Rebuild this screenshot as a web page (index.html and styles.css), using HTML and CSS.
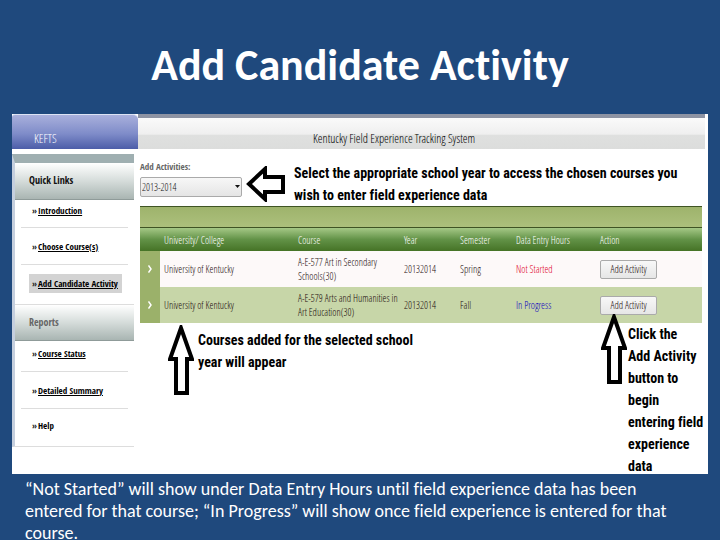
FILE: index.html
```
<!DOCTYPE html>
<html lang="en">
<head>
<meta charset="utf-8">
<title>Add Candidate Activity</title>
<link rel="stylesheet" href="styles.css">
</head>
<body>
<main class="slide">
  <h1 class="title">Add Candidate Activity</h1>
  <section class="screen">
    <header class="topbar">
      <div class="tab">KEFTS</div>
      <div class="banner">Kentucky Field Experience Tracking System</div>
    </header>
    <div class="body">
      <nav class="sidebar">
        <h2 class="side-head">Quick Links</h2>
        <ul class="links">
          <li><span>»</span><a href="#">Introduction</a></li>
          <li><span>»</span><a href="#">Choose Course(s)</a></li>
          <li class="current"><span>»</span><a href="#">Add Candidate Activity</a></li>
        </ul>
        <h2 class="side-head reports">Reports</h2>
        <ul class="links">
          <li><span>»</span><a href="#">Course Status</a></li>
          <li><span>»</span><a href="#">Detailed Summary</a></li>
          <li><span>»</span><a href="#" class="plain">Help</a></li>
        </ul>
      </nav>
      <div class="content">
        <div class="filter">
          <div class="field">
            <label for="year">Add Activities:</label>
            <div class="pick">
              <select id="year"><option>2013-2014</option></select>
              <svg class="caret" viewBox="0 0 5 3"><path d="M0 0h5L2.500 3z"/></svg>
            </div>
          </div>
          <svg class="arrow-left" viewBox="0 0 40 36"><path d="M3 18 19 3V11H37V26H19V33Z"/></svg>
          <p class="note">Select the appropriate school year to access the chosen courses you<br>wish to enter field experience data</p>
        </div>
        <div class="toolbar"></div>
        <table class="courses">
          <colgroup><col class="c-mark"><col class="c-uni"><col class="c-course"><col class="c-year"><col class="c-sem"><col class="c-hours"><col></colgroup>
          <thead>
            <tr><th></th><th>University/ College</th><th>Course</th><th>Year</th><th>Semester</th><th>Data Entry Hours</th><th>Action</th></tr>
          </thead>
          <tbody>
            <tr><td class="mark"><svg viewBox="0 0 4 8"><path d="M.5.5 3 4 .5 7.500"/></svg></td><td>University of Kentucky</td><td>A-E-577 Art in Secondary<br>Schools(30)</td><td>20132014</td><td>Spring</td><td class="not-started">Not Started</td><td><button type="button">Add Activity</button></td></tr>
            <tr><td class="mark"><svg viewBox="0 0 4 8"><path d="M.5.5 3 4 .5 7.500"/></svg></td><td>University of Kentucky</td><td>A-E-579 Arts and Humanities in<br>Art Education(30)</td><td>20132014</td><td>Fall</td><td class="in-progress">In Progress</td><td><button type="button">Add Activity</button></td></tr>
          </tbody>
        </table>
        <div class="notes">
          <svg class="arrow-up" viewBox="0 0 26 70"><path d="M13 3 2 34H8V68H19V34H24Z"/></svg>
          <p class="note courses-note">Courses added for the selected school<br>year will appear</p>
          <svg class="arrow-up over" viewBox="0 0 26 70"><path d="M13 3 2 34H8V68H19V34H24Z"/></svg>
          <p class="note click-note">Click the<br>Add Activity<br>button to<br>begin<br>entering field<br>experience<br>data</p>
        </div>
      </div>
    </div>
  </section>
  <p class="caption">“Not Started” will show under Data Entry Hours until field experience data has been<br>entered for that course; “In Progress” will show once field experience is entered for that<br>course.</p>
</main>
</body>
</html>
```
FILE: styles.css
```
* { box-sizing: border-box; }
body {
  margin: 0;
  background: #1f497d;
  font-family: Carlito, Lato, sans-serif;
  font-variant-ligatures: none;
  color: #222;
}
h1, h2, p, ul { margin: 0; padding: 0; }
.slide { padding: 38px 12px 0; }
.title {
  font-size: 44px;
  line-height: 54px;
  color: #fff;
  text-align: center;
  margin-bottom: 22px;
}
.screen {
  background: #fff;
  min-height: 360px;
  font-family: "Open Sans Condensed Light", "Roboto Condensed", Carlito, sans-serif;
  font-size: 10px;
}

.topbar { display: flex; height: 35px; }
.tab {
  width: 126px;
  padding: 17px 0 0 22px;
  border-top: 1px solid #dce3f4;
  border-radius: 3px 5px 0 0;
  background: linear-gradient(#a9b0dc, #7f8cc9 55%, #4c5da8);
  color: #fff;
  font-size: 12px;
  line-height: 14px;
}
.banner {
  flex: 1;
  margin-right: 3px;
  border-top: 4px solid #8d93a3;
  padding: 14px 0 0 175px;
  background: linear-gradient(#fafafa, #efefef 52%, #dfe0df 56%, #dcdddc);
  color: #000;
  font-size: 12px;
  line-height: 14px;
}

.body { display: flex; padding-top: 5px; }
.sidebar {
  width: 122px;
  border-top: 9px solid #9fafb1;
  border-left: 3px solid #c5cfde;
  border-bottom: 1px solid #ddd;
  align-self: flex-start;
  font-family: "Open Sans Condensed", "Roboto Condensed", Carlito, sans-serif;
}
.side-head {
  height: 37px;
  padding-left: 14px;
  border-bottom: 1px solid #8f9b99;
  background: linear-gradient(#fff, #d5dcda 50%, #a9b5b2);
  font-size: 10px;
  line-height: 35px;
  color: #111;
}
.reports { color: #666; border-top: 1px solid #ddd; }
.links { list-style: none; padding: 0 6px; font-size: 9px; }
.links li {
  display: flex;
  align-items: center;
  height: 37px;
  padding-left: 11px;
  border-bottom: 1px solid #ddd;
}
.links span { width: 6px; }
.links li:first-child { height: 28px; padding-bottom: 6px; }
.links li:last-child { border: 0; }
.links a { color: #000; font-weight: bold; text-underline-offset: 1px; }
.links .plain { text-decoration: none; }
.links .current {
  height: 19px;
  margin: 9px 6px 11px 8px;
  padding-left: 3px;
  background: #d3d3d3;
  white-space: nowrap;
}
.reports + .links li:first-child { height: 31px; }
.reports + .links li:last-child { padding-bottom: 4px; }

.content { flex: 1; min-width: 0; margin: 0 6px; }
.filter { display: flex; height: 52px; }
.field { width: 102px; padding-top: 6px; }
.field label {
  display: block;
  height: 17px;
  font-family: "Open Sans Condensed", "Roboto Condensed", Carlito, sans-serif;
  font-size: 9px;
  line-height: 14px;
  font-weight: bold;
  color: #666;
}
.pick { position: relative; }
.pick select {
  appearance: none;
  display: block;
  width: 100%;
  height: 20px;
  padding: 0 1px;
  border: 1px solid #aaa;
  border-radius: 2px;
  background: linear-gradient(#f7f7f7, #e5e5e5);
  font: inherit;
  color: #111;
}
.caret { position: absolute; right: 2px; top: 8px; width: 5px; height: 3px; fill: #111; }
.arrow-left, .arrow-up { fill: #fff; stroke: #000; stroke-width: 4; flex: none; }
.arrow-left { width: 40px; height: 36px; margin: 12px 8px 0 4px; }
.note {
  font-family: "Roboto Condensed", Carlito, sans-serif;
  font-size: 14px;
  line-height: 22px;
  font-weight: bold;
  color: #000;
  white-space: nowrap;
}
.filter .note { padding-top: 8px; margin-right: -6px; }

.toolbar {
  height: 22px;
  border-top: 1px solid #3f5424;
  border-bottom: 1px solid #3f5424;
  background: linear-gradient(#9eb36c, #acc07c);
}
.courses { width: 100%; table-layout: fixed; border-collapse: collapse; font-size: 10px; line-height: 14px; }
.c-mark { width: 20px; }
.c-uni { width: 134px; }
.c-course { width: 106px; }
.c-year { width: 56px; }
.c-sem { width: 56px; }
.c-hours { width: 84px; }
.courses th, .courses td { padding: 0 0 0 4px; text-align: left; font-weight: normal; white-space: nowrap; }
.courses thead tr { height: 23px; background: linear-gradient(#a5c886, #629247 50%, #457326); color: #fff; }
.courses tbody tr { height: 36px; background: #fdf9f9; color: #1c0c0c; }
.courses tbody tr:last-child { background: #c7d6a8; }
.courses .mark { background: #9bb16a; padding-left: 8px; }
.mark svg { display: block; width: 4px; height: 8px; fill: none; stroke: #fff; stroke-width: 1.5; }
.courses .not-started { color: #e00028; }
.courses .in-progress { color: #0c00c0; }
.courses button {
  display: block;
  width: 57px;
  height: 19px;
  padding: 0;
  border: 1px solid #aaa;
  border-radius: 2px;
  background: linear-gradient(#f8f8f8, #e6e6e6);
  font: inherit;
  line-height: 16px;
  color: #1c0c0c;
}
.notes { position: relative; display: flex; height: 151px; padding-left: 28px; }
.arrow-up { width: 26px; height: 70px; margin-top: 2px; }
.courses-note { padding: 6px 0 0 4px; }
.over { position: absolute; right: 75px; top: -11px; }
.click-note { width: 74px; margin-left: auto; }

.caption {
  margin: 4px 0 0 13px;
  font-size: 18px;
  line-height: 22px;
  color: #fff;
  white-space: nowrap;
}
```
